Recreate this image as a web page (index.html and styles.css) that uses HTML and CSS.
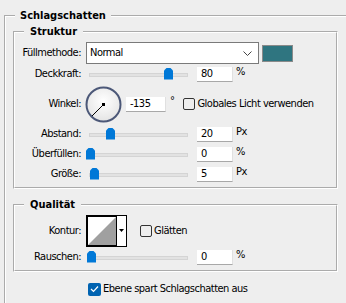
FILE: index.html
```html
<!DOCTYPE html>
<html lang="de">
<head>
  <meta charset="UTF-8">
  <title>Schlagschatten</title>
  <link rel="stylesheet" href="styles.css">
</head>
<body>
  <fieldset class="group outer">
    <legend>Schlagschatten</legend>

    <fieldset class="group">
      <legend>Struktur</legend>

      <div class="row row-select">
        <span class="lbl">Füllmethode:</span>
        <div class="select">
          <span>Normal</span>
          <svg class="chev" width="9" height="5" viewBox="0 0 9 5"><path d="M0.5 0.5 L4.5 4.5 L8.5 0.5" fill="none" stroke="#444" stroke-width="1"/></svg>
        </div>
        <div class="swatch"></div>
      </div>

      <div class="row">
        <span class="lbl">Deckkraft:</span>
        <div class="slider"><i class="thumb" style="left: 74px"></i></div>
        <div class="num">80</div>
        <span class="unit">%</span>
      </div>

      <div class="row row-angle">
        <span class="lbl">Winkel:</span>
        <svg class="dial" width="37" height="37" viewBox="0 0 37 37">
          <defs>
            <radialGradient id="dialFill" cx="50%" cy="40%" r="60%">
              <stop offset="0" stop-color="#ffffff"/>
              <stop offset="1" stop-color="#e4e4e4"/>
            </radialGradient>
          </defs>
          <circle cx="18.5" cy="18.5" r="17" fill="url(#dialFill)" stroke="#4c5878" stroke-width="2"/>
          <line x1="18.5" y1="18.5" x2="7" y2="30" stroke="#000" stroke-width="1"/>
          <rect x="17" y="17" width="3" height="3" fill="#000"/>
        </svg>
        <div class="num num-angle">-135</div>
        <span class="unit deg">°</span>
        <span class="check check-global"></span>
        <span class="check-text">Globales Licht verwenden</span>
      </div>

      <div class="row">
        <span class="lbl">Abstand:</span>
        <div class="slider"><i class="thumb" style="left: 16px"></i></div>
        <div class="num">20</div>
        <span class="unit">Px</span>
      </div>

      <div class="row">
        <span class="lbl">Überfüllen:</span>
        <div class="slider"><i class="thumb" style="left: -4px"></i></div>
        <div class="num">0</div>
        <span class="unit">%</span>
      </div>

      <div class="row">
        <span class="lbl">Größe:</span>
        <div class="slider"><i class="thumb" style="left: 0px"></i></div>
        <div class="num">5</div>
        <span class="unit">Px</span>
      </div>
    </fieldset>

    <fieldset class="group quality">
      <legend>Qualität</legend>

      <div class="row row-contour">
        <span class="lbl">Kontur:</span>
        <svg class="contour" width="41" height="32" viewBox="0 0 41 32">
          <rect x="0" y="0" width="41" height="32" fill="#000"/>
          <rect x="2" y="2" width="28" height="28" fill="#fff"/>
          <polygon points="2,30 30,2 30,30" fill="#a0a0a0"/>
          <rect x="31" y="1" width="9" height="30" fill="#fff"/>
          <polygon points="33,14 38,14 35.5,17" fill="#000"/>
        </svg>
        <span class="check check-smooth"></span>
        <span class="check-text">Glätten</span>
      </div>

      <div class="row">
        <span class="lbl">Rauschen:</span>
        <div class="slider"><i class="thumb" style="left: -3px"></i></div>
        <div class="num">0</div>
        <span class="unit">%</span>
      </div>
    </fieldset>

    <div class="row row-knockout">
      <span class="check checked">
        <svg width="9" height="8" viewBox="0 0 9 8"><path d="M1 4 L3.5 6.5 L8 1.5" fill="none" stroke="#fff" stroke-width="1.2"/></svg>
      </span>
      <span class="check-text">Ebene spart Schlagschatten aus</span>
    </div>
  </fieldset>
</body>
</html>
```

FILE: styles.css
```css
* {
  box-sizing: border-box;
}

html, body {
  margin: 0;
  height: 100%;
  overflow: hidden;
  background: #eeeeee;
}

body {
  font-family: "DejaVu Sans Condensed", "DejaVu Sans", sans-serif;
  font-stretch: semi-condensed;
  font-size: 11px;
  line-height: 14px;
  letter-spacing: -0.5px;
  color: #000;
}

.group {
  margin: 0;
  padding: 0;
  border: 2px groove #fff;
  min-width: 0;
}

.group legend {
  font-weight: bold;
  line-height: 14px;
  letter-spacing: 0;
  padding: 0 6px;
  margin-left: 9px;
}

.outer {
  margin: 9px 0 0 4px;
  padding: 0 7px 6px;
  width: 342px;
  border-right: none;
  border-bottom: none;
}

.outer > legend {
  margin-left: 2px;
  padding: 0 5px;
}

.outer > .group {
  width: 325px;
  margin-top: 2px;
  padding: 3px 0 3px;
}

.outer > .quality {
  margin-top: 9px;
  padding-top: 3px;
}

.row {
  display: flex;
  align-items: center;
  height: 20px;
}

.lbl {
  width: 66px;
  margin-right: 5px;
  text-align: right;
  white-space: nowrap;
}

.row-select {
  height: 22px;
}

.select {
  width: 173px;
  height: 22px;
  border: 1px solid #7a7a7a;
  background: #fff;
  display: flex;
  align-items: center;
  justify-content: space-between;
  padding: 0 6px 0 3px;
}

.swatch {
  width: 31px;
  height: 17px;
  margin-left: 3px;
  border: 1px solid #8a8a8a;
  background: #2f7580;
}

.slider {
  position: relative;
  width: 99px;
  height: 4px;
  margin: 1px 9px 0 3px;
  background: #e2e2e2;
  border: 1px solid #d4d4d4;
}

.thumb {
  position: absolute;
  top: -6px;
  width: 9px;
  height: 12px;
  background: #0078d7;
  clip-path: polygon(0 3px, 3px 0, 6px 0, 100% 3px, 100% 100%, 0 100%);
}

.num {
  width: 36px;
  height: 15px;
  line-height: 13px;
  padding-left: 4px;
  background: #fff;
  border-bottom: 1px solid #a8a8a8;
  border-right: 1px solid #e0e0e0;
}

.unit {
  align-self: flex-start;
  margin: 1px 0 0 3px;
}

.row-angle {
  height: 40px;
}

.dial {
  margin-left: -1px;
}

.num-angle {
  width: 40px;
  margin-left: 4px;
}

.deg {
  margin: 10px 0 0 4px;
}

.check {
  width: 12px;
  height: 12px;
  border: 1px solid #333;
  border-radius: 2px;
  margin: 0 2px 0 10px;
}

.check-global {
  margin-left: 9px;
}

.row-contour {
  height: 32px;
}

.contour {
  display: block;
}

.check-smooth {
  margin-left: 13px;
}

.row-knockout {
  margin-top: 7px;
  padding-left: 75px;
}

.checked {
  width: 13px;
  height: 13px;
  margin: 0 2px 0 0;
  border: none;
  background: #0063b1;
  display: flex;
  align-items: center;
  justify-content: center;
}
```
